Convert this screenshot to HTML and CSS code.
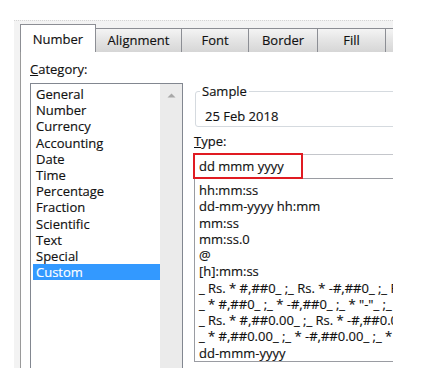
FILE: index.html
```html
<!DOCTYPE html>
<html>
<head>
<meta charset="utf-8">
<link rel="stylesheet" href="styles.css">
</head>
<body>
<div class="dialog">
  <div class="tabs">
    <div class="tab tab-active" style="width:76px">Number</div>
    <div class="tab" style="width:87px">Alignment</div>
    <div class="tab" style="width:68px">Font</div>
    <div class="tab" style="width:70px">Border</div>
    <div class="tab" style="width:69px">Fill</div>
    <div class="tab tab-last" style="width:90px">Protection</div>
  </div>
  <div class="page">
    <div class="left-col">
      <div class="label"><u>C</u>ategory:</div>
      <div class="listbox">
        <div class="items">
          <div class="item">General</div>
          <div class="item">Number</div>
          <div class="item">Currency</div>
          <div class="item">Accounting</div>
          <div class="item">Date</div>
          <div class="item">Time</div>
          <div class="item">Percentage</div>
          <div class="item">Fraction</div>
          <div class="item">Scientific</div>
          <div class="item">Text</div>
          <div class="item">Special</div>
          <div class="item item-selected">Custom</div>
        </div>
        <div class="scrollbar">
          <svg class="arrow" width="9" height="5" viewBox="0 0 9 5"><path d="M0.5 4.5 L4.5 0.5 L8.5 4.5 Z" fill="#a8a8a8"/></svg>
        </div>
      </div>
    </div>
    <div class="right-col">
      <fieldset class="sample">
        <legend>Sample</legend>
        <div class="sample-value">25 Feb 2018</div>
      </fieldset>
      <div class="label type-label"><u>T</u>ype:</div>
      <div class="type-input">
        <span>dd mmm yyyy</span>
        <div class="highlight"></div>
      </div>
      <div class="type-list">
        <div class="type-item">hh:mm:ss</div>
        <div class="type-item">dd-mm-yyyy hh:mm</div>
        <div class="type-item">mm:ss</div>
        <div class="type-item">mm:ss.0</div>
        <div class="type-item">@</div>
        <div class="type-item">[h]:mm:ss</div>
        <div class="type-item">_ Rs. * #,##0_ ;_ Rs. * -#,##0_ ;_ Rs. * "-"_ ;_ @_</div>
        <div class="type-item">_ * #,##0_ ;_ * -#,##0_ ;_ * "-"_ ;_ @_</div>
        <div class="type-item">_ Rs. * #,##0.00_ ;_ Rs. * -#,##0.00_ ;_ Rs. * "-"??_ ;_ @_</div>
        <div class="type-item">_ * #,##0.00_ ;_ * -#,##0.00_ ;_ * "-"??_ ;_ @_</div>
        <div class="type-item">dd-mmm-yyyy</div>
      </div>
    </div>
  </div>
</div>
</body>
</html>
```
FILE: styles.css
```css
* { box-sizing: border-box; }
html, body { margin: 0; padding: 0; background: #fff; }
body {
  font-family: "Open Sans", "Noto Sans", sans-serif;
  font-size: 13px;
  color: #111;
  -webkit-text-stroke: 0.15px #111;
}
.dialog {
  margin: 20px 0 0 14px;
  width: 379px;
  height: 348px;
  background: #f3f3f3;
  border-top: 1px dotted #d4d4d4;
  overflow: hidden;
  padding: 3px 0 0 6px;
  display: flex;
  flex-direction: column;
}
.tabs {
  display: flex;
  align-items: flex-end;
  height: 28px;
  flex: none;
  position: relative;
  z-index: 1;
}
.tab {
  flex: none;
  height: 24px;
  border: 1px solid #8c8e94;
  border-bottom: none;
  margin-left: -1px;
  background: linear-gradient(#f4f4f4, #e4e4e4 50%, #d6d6d6);
  text-align: center;
  line-height: 22px;
  white-space: nowrap;
  overflow: hidden;
}
.tab-last { text-align: right; padding-right: 4px; }
.tab-active {
  margin-left: 0;
  height: 28px;
  background: #fff;
  padding-top: 3px;
  line-height: 22px;
}
.page {
  flex: 1;
  width: 420px;
  background: #fff;
  border-top: 1px solid #8c8e94;
  border-left: 1px solid #9a9a9a;
  margin-top: -1px;
  display: flex;
  gap: 11px;
  padding: 9px 0 0 9px;
}
.label { line-height: 16px; }
.left-col { flex: none; width: 153px; display: flex; flex-direction: column; }
.listbox {
  margin-top: 6px;
  flex: 1;
  display: flex;
  border: 1px solid #828790;
  border-bottom: none;
}
.items { width: 129px; padding: 2px 0 0 2px; }
.item { line-height: 16.2px; padding-left: 3px; white-space: nowrap; }
.item-selected { background: #3399ff; color: #fff; -webkit-text-stroke: 0.15px #fff; }
.scrollbar {
  width: 22px;
  background: #ebebeb;
  display: flex;
  justify-content: center;
  align-items: flex-start;
  padding-top: 9px;
}
.arrow { display: block; }
.right-col { flex: none; width: 230px; display: flex; flex-direction: column; }
.sample {
  margin: 22px 0 0 1px;
  padding: 0 0 2px 9px;
  border: 1px solid #d5dadf;
  border-radius: 3px;
  min-width: 0;
}
.sample legend {
  padding: 0 2px;
  margin-left: -5px;
  line-height: 16px;
}
.sample-value { line-height: 16px; padding-top: 9px; }
.type-label { margin-top: 6px; }
.type-input {
  position: relative;
  margin-top: 5px;
  height: 25px;
  border-top: 1px solid #c4c6cb;
  border-left: 1px solid #c4c6cb;
  border-bottom: 1px solid #9a9ca2;
  padding-left: 4px;
  line-height: 22px;
  white-space: nowrap;
}
.highlight {
  position: absolute;
  left: -2px;
  top: -2px;
  width: 110px;
  height: 26px;
  border: 2px solid #e01b22;
}
.type-list {
  border-left: 1px solid #9a9ca2;
  border-bottom: 1px solid #9a9ca2;
  padding: 3px 0 0 4px;
  overflow: hidden;
}
.type-item { line-height: 16.25px; white-space: nowrap; }
```
